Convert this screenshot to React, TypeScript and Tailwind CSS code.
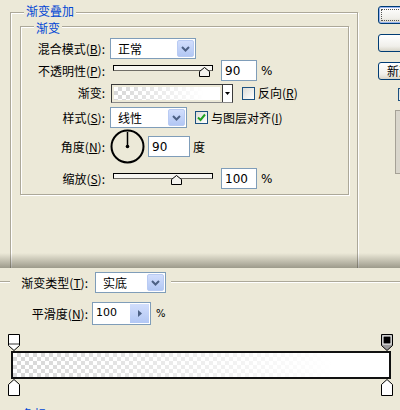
import React from 'react';

// XP-style dialog widgets

function Label({ children, w }: { children: React.ReactNode; w: string }) {
  return <div className={`${w} shrink-0 text-right whitespace-nowrap`}>{children}</div>;
}

function Select({ w, text }: { w: string; text: string }) {
  return (
    <div className={`${w} h-[21px] shrink-0 flex items-center border border-[#7F9DB9] bg-white p-px`}>
      <span className="flex-1 pl-[6px]">{text}</span>
      <span className="w-[17px] h-full rounded-[2px] border border-[#B9CBF3] bg-[linear-gradient(#D2DEFC,#B2C7F4)] flex items-center justify-center">
        <svg width="9" height="6" viewBox="0 0 9 6">
          <path d="M1 1l3.5 3.5L8 1" stroke="#4D6185" strokeWidth="2" fill="none" />
        </svg>
      </span>
    </div>
  );
}

function NumBox({ w, value }: { w: string; value: string }) {
  return (
    <div className={`${w} h-[21px] shrink-0 flex items-center border border-[#7F9DB9] bg-white pl-[3px] font-['DejaVu_Sans',sans-serif] text-[12px]`}>
      {value}
    </div>
  );
}

function Slider({ left }: { left: string }) {
  return (
    <div className="relative w-[100px] h-[14px] shrink-0">
      <div className="absolute top-[1px] left-0 right-0 h-[6px] border border-black border-b-[#6f6d66] bg-[#F7F6F1]" />
      <svg className={`absolute top-[3px] ${left}`} width="11" height="10" viewBox="0 0 11 10">
        <path d="M0.5 9.5V4.5L5.5 0.5L10.5 4.5V9.5Z" fill="#F4F3EE" stroke="#000" />
      </svg>
    </div>
  );
}

function Check({ on }: { on?: boolean }) {
  return (
    <span className="w-[13px] h-[13px] shrink-0 border border-[#1C5180] bg-[linear-gradient(135deg,#DCDCD7,#fff)] flex items-center justify-center">
      {on && (
        <svg width="11" height="11" viewBox="0 0 11 11">
          <path d="M2 5.5l2.5 2.5L9 2.5" stroke="#21A121" strokeWidth="2" fill="none" />
        </svg>
      )}
    </span>
  );
}

function XpButton({ children, focus }: { children?: React.ReactNode; focus?: boolean }) {
  return (
    <div
      className={`h-[18px] rounded-[3px] border border-[#003C74] bg-[linear-gradient(#fff,#F0EFEA_70%,#D8D5C8)] flex items-center ${
        focus ? 'shadow-[inset_0_0_0_1px_#98B4F0]' : ''
      }`}
    >
      {focus ? <div className="m-[2px] flex-1 self-stretch border border-dotted border-[#555]" /> : <span className="pl-[8px] whitespace-nowrap">{children}</span>}
    </div>
  );
}

function TopStop({ solid }: { solid?: boolean }) {
  return (
    <svg width="12" height="17" viewBox="0 0 12 17">
      <path d="M0.5 0.5H11.5V11.5L6 16.5L0.5 11.5Z" fill={solid ? '#9a9a9a' : '#fff'} stroke="#000" />
      {solid ? <rect x="2" y="2" width="8" height="8" fill="#000" stroke="#fff" /> : <rect x="1" y="9" width="10" height="2" fill="#9a9a9a" />}
    </svg>
  );
}

function BottomStop() {
  return (
    <svg width="12" height="17" viewBox="0 0 12 17">
      <path d="M0.5 16.5V5.5L6 0.5L11.5 5.5V16.5Z" fill="#fff" stroke="#000" />
    </svg>
  );
}

export default function App() {
  return (
    <div className="w-[400px] h-[410px] overflow-hidden bg-[#ECE9D8] text-black text-[12px] leading-none font-['Noto_Sans_CJK_SC','Noto_Sans',sans-serif]">
      {/* Layer style dialog */}
      <div className="relative h-[268px] overflow-hidden flex">
        <div className="relative ml-[10px] mt-[12px] w-[348px] h-[270px] shrink-0 border border-[#ACA899] shadow-[inset_1px_1px_0_#fff,1px_1px_0_#fff]">
          <span className="absolute -top-[8px] left-[13px] px-[2px] bg-[#ECE9D8] text-[#0046D5]">渐变叠加</span>

          <div className="relative ml-[9px] mt-[13px] w-[329px] h-[169px] border border-[#ACA899] shadow-[inset_1px_1px_0_#fff,1px_1px_0_#fff]">
            <span className="absolute -top-[5px] left-[13px] px-[2px] bg-[#ECE9D8] text-[#0046D5]">渐变</span>

            <div className="mt-[11px] h-[21px] flex items-center">
              <Label w="w-[84px]">混合模式(<u>B</u>):</Label>
              <div className="ml-[5px]">
                <Select w="w-[86px]" text="正常" />
              </div>
            </div>

            <div className="mt-[1px] h-[21px] flex items-center">
              <Label w="w-[84px]">不透明性(<u>P</u>):</Label>
              <div className="ml-[8px]">
                <Slider left="left-[86px]" />
              </div>
              <div className="ml-[8px]">
                <NumBox w="w-[36px]" value="90" />
              </div>
              <span className="ml-[4px] font-['DejaVu_Sans',sans-serif]">%</span>
            </div>

            <div className="mt-[2px] h-[20px] flex items-center">
              <Label w="w-[84px]">渐变:</Label>
              <div className="ml-[6px] w-[122px] h-[19px] flex border border-[#3a3a3a] border-b-[#8a8a8a]">
                <div className="flex-1 m-[2px] bg-[linear-gradient(to_right,rgba(255,255,255,0.15),#fff_85%),repeating-conic-gradient(#cfcfcf_0_25%,#fff_0_50%)] bg-[length:100%_100%,8px_8px]" />
                <div className="w-[10px] border-l border-[#3a3a3a] bg-white flex items-center justify-center">
                  <svg width="5" height="3" viewBox="0 0 5 3">
                    <path d="M0 0H5L2.5 3Z" fill="#000" />
                  </svg>
                </div>
              </div>
              <div className="ml-[9px]">
                <Check />
              </div>
              <span className="ml-[3px]">反向(<u>R</u>)</span>
            </div>

            <div className="mt-[4px] h-[21px] flex items-center">
              <Label w="w-[84px]">样式(<u>S</u>):</Label>
              <div className="ml-[5px]">
                <Select w="w-[77px]" text="线性" />
              </div>
              <div className="ml-[8px]">
                <Check on />
              </div>
              <span className="ml-[3px]">与图层对齐(<u>I</u>)</span>
            </div>

            <div className="mt-[1px] h-[35px] flex items-center">
              <Label w="w-[84px]">角度(<u>N</u>):</Label>
              <svg className="ml-[5px] shrink-0" width="35" height="35" viewBox="0 0 35 35">
                <circle cx="17.5" cy="17.5" r="16" fill="none" stroke="#000" strokeWidth="2" />
                <line x1="17.5" y1="17.5" x2="17.5" y2="3" stroke="#000" strokeWidth="1.5" />
                <circle cx="17.5" cy="17.5" r="1.8" fill="#000" />
              </svg>
              <div className="ml-[3px]">
                <NumBox w="w-[42px]" value="90" />
              </div>
              <span className="ml-[3px]">度</span>
            </div>

            <div className="mt-[4px] h-[21px] flex items-center">
              <Label w="w-[84px]">缩放(<u>S</u>):</Label>
              <div className="ml-[8px]">
                <Slider left="left-[58px]" />
              </div>
              <div className="ml-[8px]">
                <NumBox w="w-[36px]" value="100" />
              </div>
              <span className="ml-[4px] font-['DejaVu_Sans',sans-serif]">%</span>
            </div>
          </div>
        </div>

        {/* Right button column (cut off) */}
        <div className="ml-[20px] w-[80px] shrink-0 pt-[6px] flex flex-col gap-[10px]">
          <XpButton focus />
          <XpButton />
          <XpButton>新建...</XpButton>
          <div className="-mt-[2px] ml-[20px]">
            <Check />
          </div>
          <div className="-mt-[1px] ml-[17px] h-[64px] border border-[#A5A196] bg-[#D9D6CC]" />
        </div>

        <div className="absolute left-0 right-0 bottom-0 h-[15px] bg-[linear-gradient(rgba(60,58,45,0),rgba(60,58,45,0.45))]" />
      </div>

      {/* Gradient editor */}
      <div className="h-[142px] overflow-hidden">
        <div className="pt-[4px] flex items-start">
          <div className="w-[10px] mt-[9px] border-t border-[#ACA899] shadow-[0_1px_0_#fff]" />
          <div className="ml-[6px] h-[21px] flex items-center">
            <Label w="w-[72px]">渐变类型(<u>T</u>):</Label>
          </div>
          <div className="ml-[7px]">
            <Select w="w-[71px]" text="实底" />
          </div>
          <div className="ml-[5px] flex-1 mt-[9px] border-t border-[#ACA899] shadow-[0_1px_0_#fff]" />
        </div>

        <div className="mt-[9px] flex items-center">
          <div className="ml-[16px] h-[23px] flex items-center">
            <Label w="w-[72px]">平滑度(<u>N</u>):</Label>
          </div>
          <div className="ml-[4px] w-[59px] h-[23px] flex border border-[#7F9DB9] bg-white">
            <span className="flex-1 pl-[3px] pt-[4px] font-['DejaVu_Sans',sans-serif] text-[11px]">100</span>
            <span className="w-[19px] m-px bg-[linear-gradient(#D2DEFC,#B2C7F4)] flex items-center justify-center">
              <svg width="4" height="7" viewBox="0 0 4 7">
                <path d="M0 0L4 3.5L0 7Z" fill="#4D6185" />
              </svg>
            </span>
          </div>
          <span className="ml-[5px] font-['DejaVu_Sans',sans-serif] text-[10px]">%</span>
        </div>

        <div className="mt-[9px] pl-[8px] pr-[7px] flex justify-between">
          <TopStop />
          <TopStop solid />
        </div>
        <div className="ml-[11px] w-[380px] h-[28px] border-2 border-[#111] bg-[linear-gradient(to_right,rgba(255,255,255,0.1),#fff_85%),repeating-conic-gradient(#d2d2d2_0_25%,#fff_0_50%)] bg-[length:100%_100%,8px_8px]" />
        <div className="pl-[8px] pr-[7px] flex justify-between">
          <BottomStop />
          <BottomStop />
        </div>
        <div className="mt-[12px] ml-[22px] text-[#0046D5]">色标</div>
      </div>
    </div>
  );
}
